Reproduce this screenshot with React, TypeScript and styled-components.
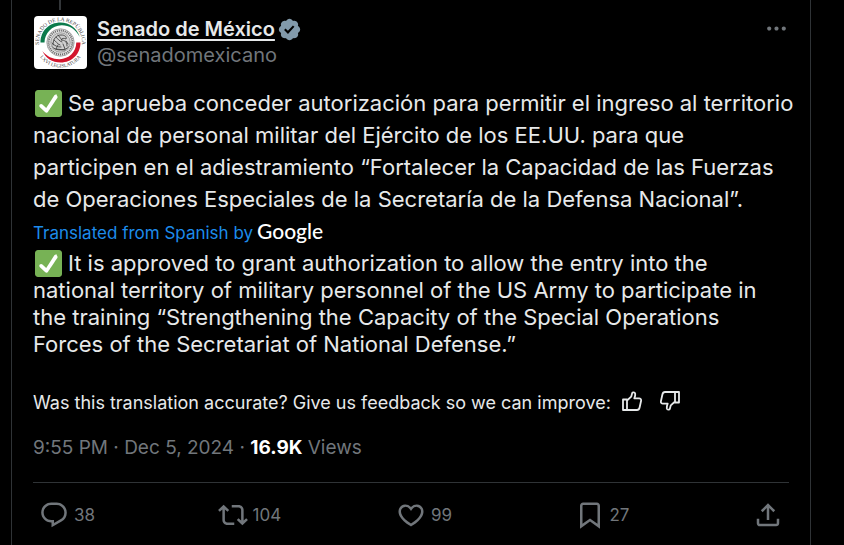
import React from "react";
import styled, { createGlobalStyle } from "styled-components";

const GlobalStyle = createGlobalStyle`
  * { box-sizing: border-box; }
  html, body, #root { height: 100%; }
  body {
    margin: 0;
    background: #000;
    color: #e7e9ea;
    font-family: "Inter", "Liberation Sans", sans-serif;
  }
`;

const Column = styled.main`
  min-height: 100%;
  margin: 0 33px 0 11px;
  padding: 0 21px;
  border: solid #2f3336;
  border-width: 0 1px;
`;

const ThreadLine = styled.div`
  width: 2px;
  height: 10px;
  margin: 0 0 6px 26px;
  background: #333639;
`;

const Header = styled.header`
  display: flex;
  align-items: flex-start;
  gap: 10px;
`;

const AvatarLink = styled.a`
  flex: none;
  width: 54px;
  height: 53px;
  padding-left: 1px;
`;

const AvatarArt = styled.svg`
  display: block;
  width: 53px;
  height: 53px;
  border-radius: 4px;
`;

const Author = styled.div`
  flex: 1;
  min-width: 0;
  font-size: 20px;
  line-height: 26px;
`;

const NameRow = styled.div`
  display: flex;
  align-items: center;
  gap: 2px;
`;

const NameLink = styled.a`
  color: #e7e9ea;
  font-weight: 600;
  text-decoration: underline;
  text-decoration-thickness: 2px;
  text-underline-offset: 3px;
`;

const HandleLink = styled.a`
  color: #71767b;
  text-decoration: none;
`;

const IconButton = styled.button<{ $color?: string }>`
  display: flex;
  flex: none;
  padding: 0;
  border: 0;
  background: none;
  color: ${(p) => p.$color ?? "#71767b"};
  cursor: pointer;
`;

const Icon = styled.svg<{ $size: number }>`
  display: block;
  flex: none;
  width: ${(p) => p.$size}px;
  height: ${(p) => p.$size}px;
  fill: currentColor;
`;

const VerifiedIcon = styled(Icon)`
  color: #829aab;
`;

const Passage = styled.p<{ $line: number }>`
  margin: 0;
  font-size: 22px;
  line-height: ${(p) => p.$line}px;
  white-space: nowrap;
`;

const Original = styled(Passage)`
  margin-top: 18px;
`;

const Emoji = styled.svg`
  display: block;
  flex: none;
  width: 27px;
  height: 27px;
  margin-left: 2px;
`;

const EmojiLine = styled.span`
  display: flex;
  align-items: center;
  gap: 6px;
`;

const Source = styled.a`
  display: flex;
  align-items: center;
  gap: 4px;
  margin: 4px 0 3px;
  color: #1d8ceb;
  font-size: 17px;
  line-height: 28px;
  text-decoration: none;
`;

const GoogleMark = styled.span`
  color: #fff;
  font-family: "Lato", sans-serif;
  font-size: 21px;
  font-weight: 500;
  line-height: 24px;
  padding-bottom: 4px;
`;

const Feedback = styled.div`
  display: flex;
  align-items: center;
  gap: 10px;
  margin-top: 32px;
  font-size: 18px;
  line-height: 22px;
  white-space: nowrap;
`;

const Thumbs = styled.div`
  display: flex;
  gap: 16px;
  padding-bottom: 4px;
`;

const Meta = styled.p`
  margin: 18px 0 0;
  color: #71767b;
  font-size: 19px;
  line-height: 28px;

  strong {
    color: #fff;
    font-weight: 700;
  }
`;

const Actions = styled.div`
  display: grid;
  grid-template-columns: repeat(4, 1fr) auto;
  margin-top: 20px;
  padding: 17px 6px 14px;
  border-top: 1px solid #2f3336;
`;

const Action = styled(IconButton)`
  align-items: center;
  gap: 5px;
  font-family: inherit;
  font-size: 17px;
  line-height: 30px;
`;

const actions = [
  {
    label: "Reply",
    count: "38",
    path: "M1.751 10c0-4.42 3.584-8 8.005-8h4.366c4.49 0 8.129 3.64 8.129 8.13 0 2.96-1.607 5.68-4.196 7.11l-8.054 4.46v-3.69h-.067c-4.49.1-8.183-3.51-8.183-8.01zm8.005-6c-3.317 0-6.005 2.69-6.005 6 0 3.37 2.77 6.08 6.138 6.01l.351-.01h1.761v2.3l5.087-2.81c1.951-1.08 3.163-3.13 3.163-5.36 0-3.39-2.744-6.13-6.129-6.13H9.756z",
  },
  {
    label: "Repost",
    count: "104",
    path: "M4.5 3.88l4.432 4.14-1.364 1.46L5.5 7.55V16c0 1.1.896 2 2 2H13v2H7.5c-2.209 0-4-1.79-4-4V7.55L1.432 9.48.068 8.02 4.5 3.88zM16.5 6H11V4h5.5c2.209 0 4 1.79 4 4v8.45l2.068-1.93 1.364 1.46-4.432 4.14-4.432-4.14 1.364-1.46 2.068 1.93V8c0-1.1-.896-2-2-2z",
  },
  {
    label: "Like",
    count: "99",
    path: "M16.697 5.5c-1.222-.06-2.679.51-3.89 2.16l-.805 1.09-.806-1.09C9.984 6.01 8.526 5.44 7.304 5.5c-1.243.07-2.349.78-2.91 1.91-.552 1.12-.633 2.78.479 4.82 1.074 1.97 3.257 4.27 7.129 6.61 3.87-2.34 6.052-4.64 7.126-6.61 1.111-2.04 1.03-3.7.477-4.82-.561-1.13-1.666-1.84-2.908-1.91zm4.187 7.69c-1.351 2.48-4.001 5.12-8.379 7.67l-.503.3-.504-.3c-4.379-2.55-7.029-5.19-8.382-7.67-1.36-2.5-1.41-4.86-.514-6.67.887-1.79 2.647-2.91 4.601-3.01 1.651-.09 3.368.56 4.798 2.01 1.429-1.45 3.146-2.1 4.796-2.01 1.954.1 3.714 1.22 4.601 3.01.896 1.81.846 4.17-.514 6.67z",
  },
  {
    label: "Bookmark",
    count: "27",
    path: "M4 4.5C4 3.12 5.119 2 6.5 2h11C18.881 2 20 3.12 20 4.5v18.44l-8-5.71-8 5.71V4.5zM6.5 4c-.276 0-.5.22-.5.5v14.56l6-4.29 6 4.29V4.5c0-.28-.224-.5-.5-.5h-11z",
  },
  {
    label: "Share",
    count: "",
    path: "M12 2.59l5.7 5.7-1.41 1.42L13 6.41V16h-2V6.41l-3.3 3.3-1.41-1.42L12 2.59zM21 15l-.02 3.51c0 1.38-1.12 2.49-2.5 2.49H5.5C4.11 21 3 19.88 3 18.5V15h2v3.5c0 .28.22.5.5.5h12.98c.28 0 .5-.22.5-.5L19 15h2z",
  },
];

function CheckEmoji() {
  return (
    <Emoji viewBox="0 0 36 36" role="img" aria-label="Check mark">
      <path fill="#77B255" d="M36 32c0 2.209-1.791 4-4 4H4c-2.209 0-4-1.791-4-4V4c0-2.209 1.791-4 4-4h28c2.209 0 4 1.791 4 4v28z" />
      <path
        fill="#FFF"
        d="M29.28 6.362c-1.156-.751-2.704-.422-3.458.736L14.936 23.877l-5.029-4.65c-1.014-.938-2.596-.875-3.533.138-.937 1.014-.875 2.596.139 3.533l7.209 6.666c.48.445 1.09.665 1.696.665.673 0 1.534-.282 2.099-1.139.332-.506 12.209-18.27 12.209-18.27.753-1.158.424-2.706-.736-3.458z"
      />
    </Emoji>
  );
}

function SenateSeal() {
  return (
    <AvatarArt viewBox="0 0 53 53" aria-hidden="true">
      <rect width="53" height="53" fill="#fff" />
      <defs>
        <path id="seal-top" d="M26.5 48a21.500 21.500 0 0 1 0-43a21.500 21.500 0 0 1 0 43" />
        <path id="seal-bottom" d="M26.5 1.500a25 25 0 0 0 0 50a25 25 0 0 0 0-50" />
      </defs>
      <g fill="#3c3c3c" fontFamily="Liberation Serif, serif" textAnchor="middle">
        <text fontSize="5.500">
          <textPath href="#seal-top" startOffset="50%">SENADO DE LA REPÚBLICA</textPath>
        </text>
        <text fontSize="5">
          <textPath href="#seal-bottom" startOffset="50%">LXVI LEGISLATURA</textPath>
        </text>
      </g>
      <path fill="#0b7a4b" d="M6.5 26.500C6.500 15 15 6.500 26.500 6.500c9 0 16.500 5.500 19.300 14.500C41.500 12.500 34.500 9 27.500 9.200 18 9.500 10.700 17 10.500 26.500z" />
      <path fill="#d3152c" d="M46.500 26.500c0 11.500-8.600 20-19.800 20-8.600 0-15.200-4.500-18.300-11.500 4.400 5.600 10.500 8.300 17.300 8.200 9-.2 16.400-7 16.600-16.700z" />
      <circle cx="26.500" cy="26.500" r="13.700" fill="#e6e6e6" stroke="#888" strokeWidth=".7" />
      <circle cx="26.500" cy="26.500" r="11.900" fill="none" stroke="#6c6c6c" strokeWidth="2" strokeDasharray="1.100 .9" />
      <circle cx="26.500" cy="26.500" r="9.800" fill="#d0d0d0" stroke="#666" strokeWidth=".5" />
      <g fill="none" stroke="#444" strokeWidth=".9" strokeLinecap="round">
        <path d="M19 29c0-6 3-10 8-10 4 0 6 2 5 4-2-1-4-1-5 1 4 0 6 2 6 6" />
        <path d="M20 24c2 1 3 4 6 5M22 21c2 2 3 4 6 5M24 19l4 5M18 27c3 3 5 4 9 4" />
        <path d="M18.500 31c3 4 13 4 16 0M22 33l9 1M24 29l-2 4M29 28l2 5M32 25l2 3" />
      </g>
    </AvatarArt>
  );
}

function ThumbIcon({ down = false }: { down?: boolean }) {
  return (
    <Icon $size={22} viewBox="0 0 22 22" aria-hidden="true">
      <g
        fill="none"
        stroke="currentColor"
        strokeWidth="1.8"
        strokeLinejoin="round"
        transform={down ? "rotate(180 11 11)" : undefined}
      >
        <path d="M2 9.500h4v10.500H2zM6 10.500l4.200-3.800 1-3.600c.3-1.100 2.600-1.200 3 .5.300 1.500-.2 3-.9 4.700H18c1.500 0 2.400 1.100 2.100 2.500l-1.500 6.700c-.3 1.300-1.200 2.500-2.600 2.500H6z" />
      </g>
    </Icon>
  );
}

export default function App() {
  return (
    <>
      <GlobalStyle />
      <Column>
        <article>
          <ThreadLine />
          <Header>
            <AvatarLink href="#senadomexicano" aria-label="Senado de México profile">
              <SenateSeal />
            </AvatarLink>
            <Author>
              <NameRow>
                <NameLink href="#senadomexicano">Senado de México</NameLink>
                <VerifiedIcon $size={25} viewBox="0 0 22 22" role="img" aria-label="Verified account">
                  <path d="M20.396 11c-.018-.646-.215-1.275-.57-1.816-.354-.54-.852-.972-1.438-1.246.223-.607.27-1.264.14-1.897-.131-.634-.437-1.218-.882-1.687-.47-.445-1.053-.75-1.687-.882-.633-.13-1.29-.083-1.897.14-.273-.587-.704-1.086-1.245-1.44S11.647 1.62 11 1.604c-.646.017-1.273.213-1.813.568s-.969.854-1.24 1.44c-.608-.223-1.267-.272-1.902-.14-.635.13-1.22.436-1.69.882-.445.47-.749 1.055-.878 1.688-.13.633-.08 1.29.144 1.896-.587.274-1.087.705-1.443 1.245-.356.54-.555 1.17-.574 1.817.02.647.218 1.276.574 1.817.356.54.856.972 1.443 1.245-.224.606-.274 1.263-.144 1.896.13.634.433 1.218.877 1.688.47.443 1.054.747 1.687.878.633.132 1.29.084 1.897-.136.274.586.705 1.084 1.246 1.439.54.354 1.17.551 1.816.569.647-.016 1.276-.213 1.817-.567s.972-.854 1.245-1.44c.604.239 1.266.296 1.903.164.636-.132 1.22-.447 1.68-.907.46-.46.776-1.044.908-1.681s.075-1.299-.165-1.903c.586-.274 1.084-.705 1.439-1.246.354-.54.551-1.17.569-1.816zM9.662 14.85l-3.429-3.428 1.293-1.302 2.072 2.072 4.4-4.794 1.347 1.246z" />
                </VerifiedIcon>
              </NameRow>
              <HandleLink href="#senadomexicano">@senadomexicano</HandleLink>
            </Author>
            <IconButton type="button" aria-label="More">
              <Icon $size={25} viewBox="0 0 24 24" aria-hidden="true">
                <path d="M3 12c0-1.1.9-2 2-2s2 .9 2 2-.9 2-2 2-2-.9-2-2zm9 2c1.1 0 2-.9 2-2s-.9-2-2-2-2 .9-2 2 .9 2 2 2zm7 0c1.100 0 2-.9 2-2s-.9-2-2-2-2 .9-2 2 .9 2 2 2z" />
              </Icon>
            </IconButton>
          </Header>

          <Original $line={32} lang="es">
            <EmojiLine>
              <CheckEmoji />
              Se aprueba conceder autorización para permitir el ingreso al territorio
            </EmojiLine>
            nacional de personal militar del Ejército de los EE.UU. para que
            <br />
            participen en el adiestramiento “Fortalecer la Capacidad de las Fuerzas
            <br />
            de Operaciones Especiales de la Secretaría de la Defensa Nacional”.
          </Original>

          <Source href="#translation">
            Translated from Spanish by <GoogleMark>Google</GoogleMark>
          </Source>

          <Passage $line={27} lang="en">
            <EmojiLine>
              <CheckEmoji />
              It is approved to grant authorization to allow the entry into the
            </EmojiLine>
            national territory of military personnel of the US Army to participate in
            <br />
            the training “Strengthening the Capacity of the Special Operations
            <br />
            Forces of the Secretariat of National Defense.”
          </Passage>

          <Feedback>
            <span>Was this translation accurate? Give us feedback so we can improve:</span>
            <Thumbs>
              <IconButton type="button" $color="#e7e9ea" aria-label="Accurate">
                <ThumbIcon />
              </IconButton>
              <IconButton type="button" $color="#e7e9ea" aria-label="Not accurate">
                <ThumbIcon down />
              </IconButton>
            </Thumbs>
          </Feedback>

          <Meta>
            9:55 PM · Dec 5, 2024 · <strong>16.9K</strong> Views
          </Meta>

          <Actions>
            {actions.map((a) => (
              <Action key={a.label} type="button" aria-label={a.label}>
                <Icon $size={30} viewBox="0 0 24 24" aria-hidden="true">
                  <path d={a.path} />
                </Icon>
                {a.count && <span>{a.count}</span>}
              </Action>
            ))}
          </Actions>
        </article>
      </Column>
    </>
  );
}
